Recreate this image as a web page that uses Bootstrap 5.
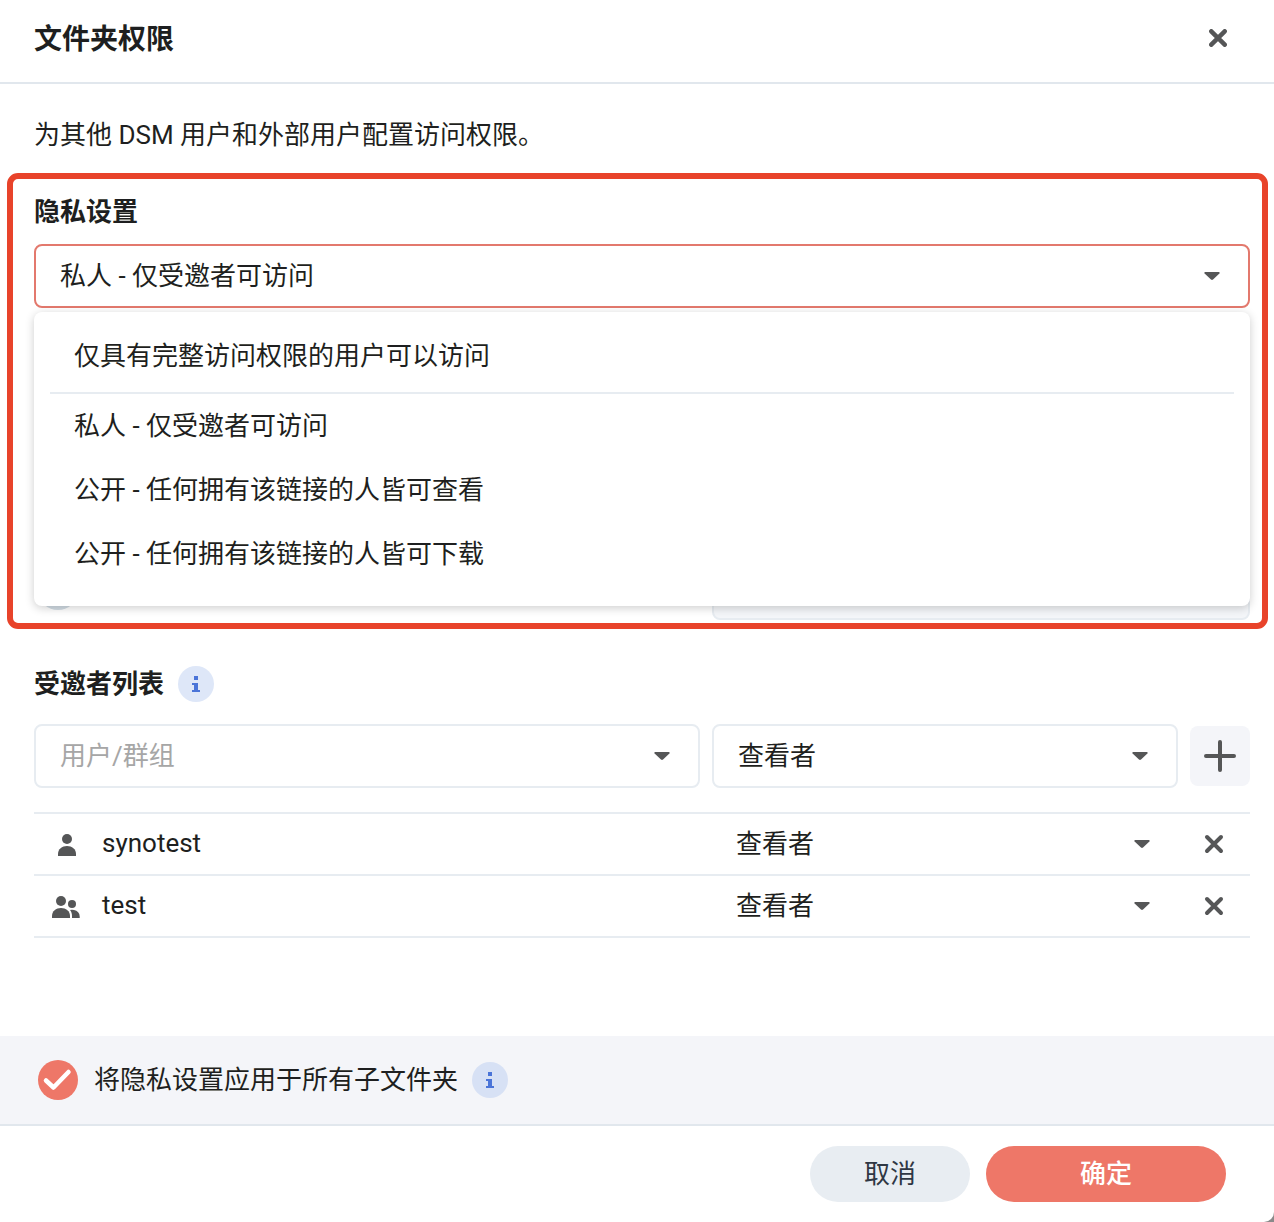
<!DOCTYPE html>
<html lang="zh-CN">
<head>
<meta charset="utf-8">
<meta name="viewport" content="width=device-width, initial-scale=1">
<title>文件夹权限</title>
<link href="https://cdn.jsdelivr.net/npm/bootstrap@5.3.0/dist/css/bootstrap.min.css" rel="stylesheet">
<style>
  :root { --line: #e7ecf1; --ink: #1e1f20; --icon: #555657; --accent: #ee7768; }
  body { font-family: Roboto, "Noto Sans CJK SC", sans-serif; font-size: 26px; line-height: 36px; color: var(--ink); background: #8a8a8a; }
  .dialog { background: #fff; border-bottom-right-radius: 10px; overflow: hidden; }
  .dialog-head { padding: 21px 47px 23px 34px; border-bottom: 2px solid #e1e7ed; }
  .dialog-title { font-size: 28px; line-height: 38px; font-weight: 600; }
  .section-title { font-size: 26px; line-height: 36px; font-weight: 600; }
  .intro { padding: 33px 34px 0; }
  .icon-btn { border: 0; background: none; padding: 0; line-height: 0; color: var(--icon); }
  .icon-btn svg, .person svg { display: block; }

  .field.form-select {
    --bs-form-select-bg-img: url("data:image/svg+xml,%3Csvg xmlns='http://www.w3.org/2000/svg' viewBox='0 0 16 8'%3E%3Cpath d='M1 0h14q1 .4.7 1.300L9 7.500q-1 .8-2 0L.3 1.300Q0 .4 1 0z' fill='%23555657'/%3E%3C/svg%3E");
    height: 64px; padding: 0 64px 0 24px; font-size: 26px; line-height: 36px; color: var(--ink);
    border: 2px solid var(--line); border-radius: 8px; background-color: #fff;
    background-size: 16px 8px; background-position: right 28px center; box-shadow: none;
  }
  .field::placeholder { color: #a6a6a6; opacity: 1; }
  .field.is-open { border-color: #e3796d; }
  .field.in-row { height: 60px; border: 0; padding-left: 21px; border-radius: 0; }

  .privacy { margin: 20px 6px 0 7px; padding: 15px 12px 3px 21px; border: 6px solid #e8432a; border-radius: 11px; }
  .privacy .section-title { margin-bottom: 14px; }
  .option-menu.dropdown-menu {
    top: 68px; left: 0; right: 0; padding: 12px 0 20px; border: 0; border-radius: 8px; font-size: 26px; color: var(--ink);
    box-shadow: 0 2px 10px rgba(0, 0, 0, .2);
  }
  .option-menu .dropdown-item { padding: 14px 40px; color: var(--ink); }
  .option-menu .dropdown-divider { margin: 4px 16px 0; border-top: 2px solid var(--line); opacity: 1; }
  .link-row { margin-top: 248px; }

  .form-grid { display: grid; grid-template-columns: minmax(0, 666fr) minmax(0, 466fr) 60px; gap: 12px; align-items: center; }
  .form-grid .span-rest { grid-column: 2 / 4; }
  .locked.form-control { height: 64px; border: 2px solid var(--line); border-radius: 8px; background: #f4f6f9; }
  .round-check.form-check-input { width: 40px; height: 40px; margin: 0; border: 0; border-radius: 50%; background-color: #d3dde5; box-shadow: none; opacity: 1; }
  .round-check.form-check-input:checked {
    background-color: var(--accent); background-size: 40px 40px;
    background-image: url("data:image/svg+xml,%3Csvg xmlns='http://www.w3.org/2000/svg' viewBox='0 0 40 40'%3E%3Cpath d='M8 20.500l7.500 7L30.500 12' fill='none' stroke='%23fff' stroke-width='4.500' stroke-linecap='round' stroke-linejoin='round'/%3E%3C/svg%3E");
  }

  .invitees { padding: 37px 24px 0 34px; }
  .invitees-head { gap: 14px; margin-bottom: 22px; }
  .info-btn { width: 36px; height: 36px; border-radius: 50%; background: #dee7f8; color: #4a74d8; }
  .info-btn.on-band { background: #d7e1f5; }
  .add-btn { width: 60px; height: 60px; border-radius: 8px; background: #f4f5f9; }
  .add-btn svg { margin: auto; }
  .member-table { table-layout: fixed; border-collapse: collapse; margin-top: 24px; }
  .member-table tr { border-bottom: 2px solid var(--line); }
  .member-table tbody { border-top: 2px solid var(--line); }
  .member-table td { padding: 0; height: 60px; vertical-align: middle; }
  .member-table .col-who { width: 56%; }
  .member-table .col-drop { width: 72px; }
  .member-name { padding-bottom: 2px; }
  .person { width: 68px; padding-left: 16px; }

  .apply-band { padding: 24px 38px; background: #f4f5f9; border-bottom: 2px solid #e1e7ed; }
  .apply-band .info-btn { margin-left: 14px; }
  .dialog-foot { padding: 20px 48px; }
  .pill.btn { height: 56px; padding: 0; border: 0; border-radius: 28px; font-size: 26px; line-height: 36px; }
  .pill-cancel.btn { width: 160px; background: #e8edf2; color: #2f3744; }
  .pill-ok.btn { width: 240px; background: var(--accent); color: #fff; font-weight: 500; }
</style>
</head>
<body>
<svg width="0" height="0" class="position-absolute" aria-hidden="true">
  <symbol id="i-info" viewBox="0 0 36 36"><path d="M16 10h4v4h-4zM14 17h6v7h2v2h-8v-2h2v-5h-2z" fill="currentColor"/></symbol>
  <symbol id="i-cross" viewBox="0 0 20 20"><path d="M3 3l14 14M17 3L3 17" fill="none" stroke="currentColor" stroke-width="4" stroke-linecap="round"/></symbol>
</svg>
<main class="dialog min-vh-100 d-flex flex-column">
  <header class="dialog-head d-flex justify-content-between align-items-start">
    <h1 class="dialog-title mb-0">文件夹权限</h1>
    <button type="button" class="icon-btn mt-2" aria-label="关闭"><svg width="18" height="18" viewBox="0 0 18 18"><path d="M2.300 2.300l13.400 13.400M15.700 2.300L2.300 15.700" fill="none" stroke="currentColor" stroke-width="4.500" stroke-linecap="round"/></svg></button>
  </header>

  <div class="flex-grow-1">
    <p class="intro mb-0">为其他 DSM 用户和外部用户配置访问权限。</p>

    <section class="privacy">
      <h2 class="section-title"><label for="privacy">隐私设置</label></h2>
      <div class="position-relative">
        <select id="privacy" class="form-select field is-open">
          <option>私人 - 仅受邀者可访问</option>
        </select>
        <ul class="dropdown-menu option-menu show">
          <li><a class="dropdown-item" href="#">仅具有完整访问权限的用户可以访问</a></li>
          <li><hr class="dropdown-divider"></li>
          <li><a class="dropdown-item" href="#">私人 - 仅受邀者可访问</a></li>
          <li><a class="dropdown-item" href="#">公开 - 任何拥有该链接的人皆可查看</a></li>
          <li><a class="dropdown-item" href="#">公开 - 任何拥有该链接的人皆可下载</a></li>
        </ul>
      </div>
      <div class="form-grid link-row">
        <div class="d-flex ps-1 pt-1"><input type="checkbox" class="form-check-input round-check" aria-label="链接选项" disabled></div>
        <input type="text" class="form-control locked span-rest" aria-label="链接设置" disabled>
      </div>
    </section>

    <section class="invitees">
      <div class="invitees-head d-flex align-items-center">
        <h2 class="section-title mb-0">受邀者列表</h2>
        <button type="button" class="icon-btn info-btn" aria-label="信息"><svg width="36" height="36"><use href="#i-info"/></svg></button>
      </div>
      <div class="form-grid">
        <input type="text" class="form-select field" placeholder="用户/群组" aria-label="用户/群组">
        <select class="form-select field" aria-label="权限"><option>查看者</option></select>
        <button type="button" class="icon-btn add-btn" aria-label="添加"><svg width="32" height="32" viewBox="0 0 32 32"><path d="M2 16h28M16 2v28" stroke="currentColor" stroke-width="4" stroke-linecap="round"/></svg></button>
      </div>
      <table class="member-table w-100">
        <colgroup><col class="col-who"><col><col class="col-drop"></colgroup>
        <tbody>
          <tr>
            <td><div class="member-name d-flex align-items-center"><span class="person"><svg width="32" height="32" viewBox="0 -5 32 32" fill="#555657"><circle cx="17" cy="7" r="5"/><path d="M8 24v-2c0-5 4-8 9-8s9 3 9 8v2z"/></svg></span>synotest</div></td>
            <td><select class="form-select field in-row" aria-label="synotest 权限"><option>查看者</option></select></td>
            <td><button type="button" class="icon-btn d-block mx-auto" aria-label="移除 synotest"><svg width="20" height="20"><use href="#i-cross"/></svg></button></td>
          </tr>
          <tr>
            <td><div class="member-name d-flex align-items-center"><span class="person"><svg width="32" height="32" viewBox="0 -5 32 32" fill="#555657"><circle cx="11" cy="7" r="5"/><path d="M2 24v-2c0-5 4-8 9-8s9 3 9 8v2z"/><circle cx="22" cy="10" r="4"/><path d="M20 16q2-.5 4 0c3.500.8 5.700 3 5.700 6.500V24H22v-2c0-2.500-.6-4.300-2-6z"/></svg></span>test</div></td>
            <td><select class="form-select field in-row" aria-label="test 权限"><option>查看者</option></select></td>
            <td><button type="button" class="icon-btn d-block mx-auto" aria-label="移除 test"><svg width="20" height="20"><use href="#i-cross"/></svg></button></td>
          </tr>
        </tbody>
      </table>
    </section>
  </div>

  <div class="apply-band d-flex align-items-center">
    <input type="checkbox" id="apply" class="form-check-input round-check flex-shrink-0" checked>
    <label for="apply" class="ms-3">将隐私设置应用于所有子文件夹</label>
    <button type="button" class="icon-btn info-btn on-band" aria-label="信息"><svg width="36" height="36"><use href="#i-info"/></svg></button>
  </div>
  <footer class="dialog-foot d-flex justify-content-end gap-3">
    <button type="button" class="btn pill pill-cancel">取消</button>
    <button type="button" class="btn pill pill-ok">确定</button>
  </footer>
</main>
<script src="https://cdn.jsdelivr.net/npm/bootstrap@5.3.0/dist/js/bootstrap.bundle.min.js"></script>
</body>
</html>
